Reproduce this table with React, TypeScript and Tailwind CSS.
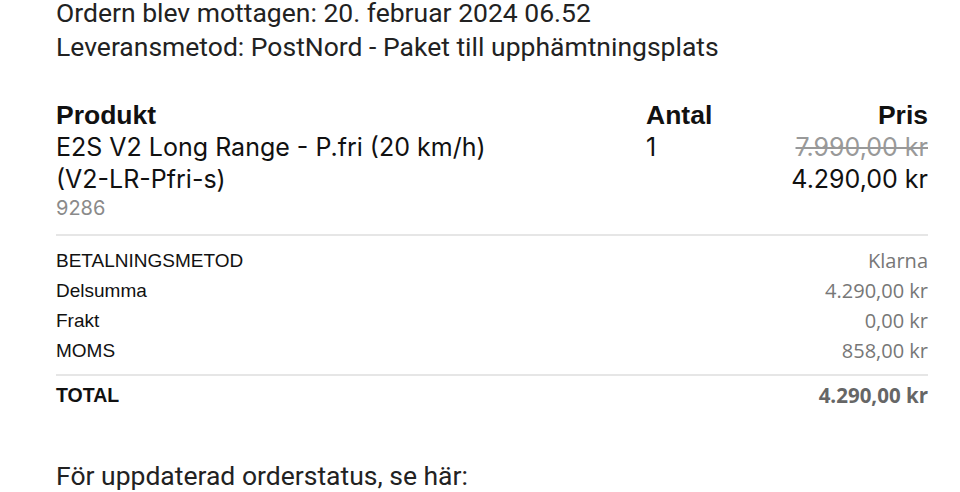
export default function App() {
  return (
    <div className="w-[960px] h-[492px] overflow-hidden bg-white">
      <div className="px-[56px] pr-[32px] -mt-[4px]">
        <div className="font-['Roboto',sans-serif] text-[26.5px] leading-[34px] text-[#222]">
          <p>Ordern blev mottagen: 20. februar 2024 06.52</p>
          <p>Leveransmetod: PostNord - Paket till upphämtningsplats</p>
        </div>

        <div className="mt-[35px] flex text-[#111] font-['Inter',sans-serif]">
          <div className="flex-1">
            <h2 className="font-['Liberation_Sans',sans-serif] font-bold text-[26.5px] leading-[32px]">Produkt</h2>
            <p className="text-[25px] leading-[32px]">E2S V2 Long Range - P.fri (20 km/h)</p>
            <p className="text-[25px] leading-[32px]">(V2-LR-Pfri-s)</p>
            <p className="text-[20px] leading-[27px] text-[#8a8a8a]">9286</p>
          </div>
          <div className="w-[282px] flex justify-between">
            <div>
              <h2 className="font-['Liberation_Sans',sans-serif] font-bold text-[26.5px] leading-[32px]">Antal</h2>
              <p className="text-[25px] leading-[32px]">1</p>
            </div>
            <div className="text-right">
              <h2 className="font-['Liberation_Sans',sans-serif] font-bold text-[26.5px] leading-[32px]">Pris</h2>
              <p className="text-[25px] leading-[32px] text-[#999] line-through">7.990,00 kr</p>
              <p className="text-[25px] leading-[32px]">4.290,00 kr</p>
            </div>
          </div>
        </div>

        <div className="mt-[12px] border-t-2 border-[#e6e6e6] pt-[10px] flex flex-col text-[19px] leading-[30px]">
          {[
            ["BETALNINGSMETOD", "Klarna"],
            ["Delsumma", "4.290,00 kr"],
            ["Frakt", "0,00 kr"],
            ["MOMS", "858,00 kr"],
          ].map(([label, value]) => (
            <div key={label} className="flex justify-between">
              <span className="font-['Liberation_Sans',sans-serif] text-[#111]">{label}</span>
              <span className="font-['Open_Sans',sans-serif] text-[20px] text-[#777]">{value}</span>
            </div>
          ))}
        </div>

        <div className="mt-[8px] border-t-2 border-[#e6e6e6] pt-[4px] flex justify-between text-[19.5px] leading-[30px]">
          <span className="font-['Liberation_Sans',sans-serif] font-bold text-[#111]">TOTAL</span>
          <span className="font-['Open_Sans',sans-serif] font-bold text-[20.5px] text-[#666]">4.290,00 kr</span>
        </div>

        <p className="mt-[49px] font-['Roboto',sans-serif] text-[26.5px] leading-[34px] text-[#222]">
          För uppdaterad orderstatus, se här:
        </p>
      </div>
    </div>
  );
}
